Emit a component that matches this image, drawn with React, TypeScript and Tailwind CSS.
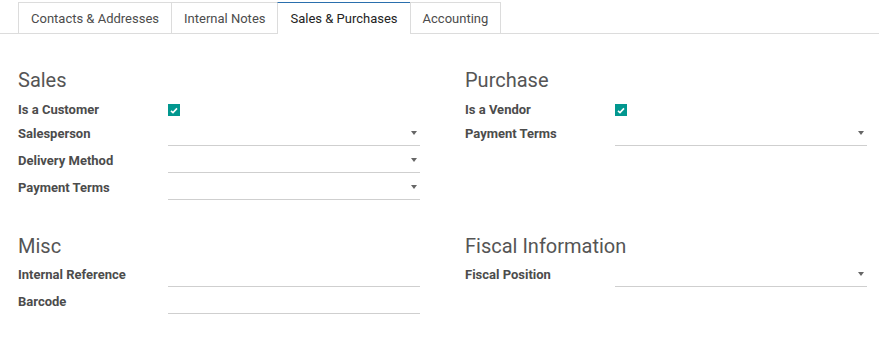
import React from "react";

const tabs = [
  { label: "Contacts & Addresses", active: false },
  { label: "Internal Notes", active: false },
  { label: "Sales & Purchases", active: true },
  { label: "Accounting", active: false },
];

function Check() {
  return (
    <span className="mt-[4px] flex h-[12px] w-[12px] items-center justify-center bg-[#01978f]">
      <svg width="8" height="7" viewBox="0 0 8 7">
        <path d="M1 3.8 L3 5.6 L7 1.4" fill="none" stroke="#fff" strokeWidth="1.6" />
      </svg>
    </span>
  );
}

function CheckRow({ label }: { label: string }) {
  return (
    <div className="flex h-[25px] items-start pt-[6px]">
      <span className="-mt-[6px] w-[150px] shrink-0 pt-[6px] text-[13px] font-bold leading-[20px]">{label}</span>
      <Check />
    </div>
  );
}

function FieldRow({ label, select = false }: { label: string; select?: boolean }) {
  return (
    <div className="flex h-[27px] items-center">
      <span className="w-[150px] shrink-0 pt-[2px] text-[13px] font-bold leading-[20px]">{label}</span>
      <div className="flex h-full flex-1 items-center justify-end border-b border-[#cfcfcf] pr-[3px] pt-[2px]">
        {select && (
          <span className="h-0 w-0 border-l-[3.5px] border-r-[3.5px] border-t-[4px] border-l-transparent border-r-transparent border-t-[#666]" />
        )}
      </div>
    </div>
  );
}

function Heading({ children }: { children: React.ReactNode }) {
  return <h2 className="h-[28px] text-[20px] font-normal leading-[28px] text-[#555]">{children}</h2>;
}

export default function App() {
  return (
    <div className="min-h-screen bg-white text-[#4c4c4c]" style={{ fontFamily: "Roboto, 'Liberation Sans', sans-serif" }}>
      {/* Tabs */}
      <ul className="flex border-b border-[#dcdcdc] pl-[18px] pt-[2px]">
        {tabs.map((t, i) => (
          <li
            key={t.label}
            className={`-mb-px flex h-[32px] items-center border-l border-t px-[12px] text-[13px] ${
              i === tabs.length - 1 ? "border-r" : ""
            } ${
              t.active
                ? "border-l-[#dcdcdc] border-t-[#2a6fad] bg-white text-[#222]"
                : "border-[#dcdcdc] text-[#4c4c4c]"
            }`}
          >
            {t.label}
          </li>
        ))}
      </ul>

      {/* Groups */}
      <div className="grid grid-cols-2 gap-x-[45px] pl-[18px] pr-[12px]">
        <div className="pt-[32px]">
          <Heading>Sales</Heading>
          <CheckRow label="Is a Customer" />
          <FieldRow label="Salesperson" select />
          <FieldRow label="Delivery Method" select />
          <FieldRow label="Payment Terms" select />
        </div>
        <div className="pt-[32px]">
          <Heading>Purchase</Heading>
          <CheckRow label="Is a Vendor" />
          <FieldRow label="Payment Terms" select />
        </div>
        <div className="pt-[32px]">
          <Heading>Misc</Heading>
          <FieldRow label="Internal Reference" />
          <FieldRow label="Barcode" />
        </div>
        <div className="pt-[32px]">
          <Heading>Fiscal Information</Heading>
          <FieldRow label="Fiscal Position" select />
        </div>
      </div>
    </div>
  );
}
